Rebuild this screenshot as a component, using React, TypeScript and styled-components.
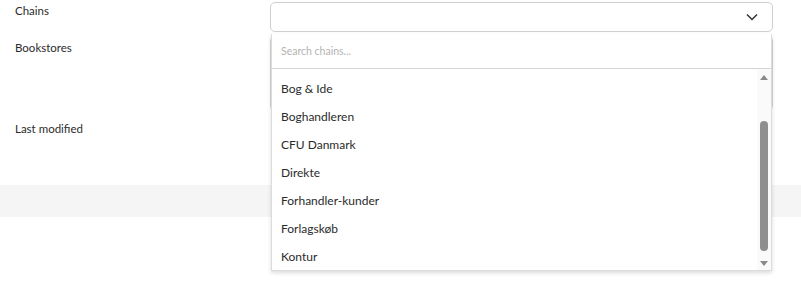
import React from "react";
import styled, { createGlobalStyle } from "styled-components";

const chains = [
  "Bog & Ide",
  "Boghandleren",
  "CFU Danmark",
  "Direkte",
  "Forhandler-kunder",
  "Forlagskøb",
  "Kontur",
];

const GlobalStyle = createGlobalStyle`
  html, body {
    margin: 0;
    padding: 0;
    background: #fff;
    font-family: Lato, "Open Sans", sans-serif;
    font-size: 12px;
    color: #2b2b2b;
  }
`;

const Page = styled.div`
  display: flex;
  flex-direction: column;
  width: 801px;
  height: 291px;
  overflow: hidden;
`;

const Row = styled.div<{ $top: number }>`
  display: flex;
  padding-right: 28px;
  margin-top: ${(p) => p.$top}px;
`;

const Label = styled.div<{ $offset?: number }>`
  width: 270px;
  padding-left: 15px;
  padding-top: ${(p) => p.$offset ?? 0}px;
  box-sizing: border-box;
  font-size: 11.5px;
  line-height: 16px;
  color: #2b2b2b;
`;

const Field = styled.div`
  position: relative;
  flex: 1;
`;

const SelectBox = styled.div`
  display: flex;
  align-items: center;
  justify-content: flex-end;
  height: 30px;
  border: 1px solid #cfcfcf;
  border-radius: 5px;
  box-sizing: border-box;
  padding-right: 14px;
  background: #fff;
`;

const TextBox = styled.div`
  height: 73px;
  border: 1px solid #d4d4d4;
  border-radius: 4px;
  box-sizing: border-box;
  background: #fff;
`;

const Band = styled.div`
  height: 32px;
  margin-top: 48px;
  background: #f5f5f5;
`;

const Dropdown = styled.div`
  position: absolute;
  top: 32px;
  left: 1px;
  right: 1px;
  height: 236px;
  display: flex;
  flex-direction: column;
  background: #fff;
  border: 1px solid #dcdcdc;
  border-top: none;
  box-shadow: 0 2px 4px rgba(0, 0, 0, 0.14);
  z-index: 10;
`;

const SearchRow = styled.div`
  display: flex;
  align-items: center;
  height: 35px;
  padding-left: 9px;
  border-bottom: 1px solid #d6d6d6;
  box-sizing: border-box;
  font-size: 10.5px;
  color: #b3b3b3;
`;

const ListArea = styled.div`
  display: flex;
  flex: 1;
  min-height: 0;
`;

const List = styled.ul`
  flex: 1;
  margin: 0;
  padding: 6px 0 0;
  list-style: none;
  overflow: hidden;
`;

const Item = styled.li`
  height: 28px;
  line-height: 28px;
  padding-left: 9px;
  font-size: 12px;
  color: #2b2b2b;
`;

const ScrollTrack = styled.div`
  display: flex;
  flex-direction: column;
  align-items: center;
  width: 14px;
  background: #fafafa;
`;

const Arrow = styled.div<{ $down?: boolean }>`
  width: 0;
  height: 0;
  margin: ${(p) => (p.$down ? "auto 0 4px" : "6px 0 0")};
  border-left: 4px solid transparent;
  border-right: 4px solid transparent;
  ${(p) =>
    p.$down ? "border-top: 5px solid #8a8a8a;" : "border-bottom: 5px solid #8a8a8a;"}
`;

const Thumb = styled.div`
  width: 8px;
  height: 130px;
  margin-top: 41px;
  border-radius: 4px;
  background: #8f8f8f;
`;

const Chevron = () => (
  <svg width="12" height="8" viewBox="0 0 12 8" fill="none">
    <path d="M1 1.5l5 5 5-5" stroke="#333" strokeWidth="1.5" />
  </svg>
);

export default function App() {
  return (
    <Page>
      <GlobalStyle />
      <Row $top={2}>
        <Label $offset={1}>Chains</Label>
        <Field>
          <SelectBox>
            <Chevron />
          </SelectBox>
          <Dropdown>
            <SearchRow>Search chains...</SearchRow>
            <ListArea>
              <List>
                {chains.map((name) => (
                  <Item key={name}>{name}</Item>
                ))}
              </List>
              <ScrollTrack>
                <Arrow />
                <Thumb />
                <Arrow $down />
              </ScrollTrack>
            </ListArea>
          </Dropdown>
        </Field>
      </Row>
      <Row $top={5}>
        <Label $offset={3}>Bookstores</Label>
        <Field>
          <TextBox />
        </Field>
      </Row>
      <Row $top={11}>
        <Label>Last modified</Label>
      </Row>
      <Band />
    </Page>
  );
}
